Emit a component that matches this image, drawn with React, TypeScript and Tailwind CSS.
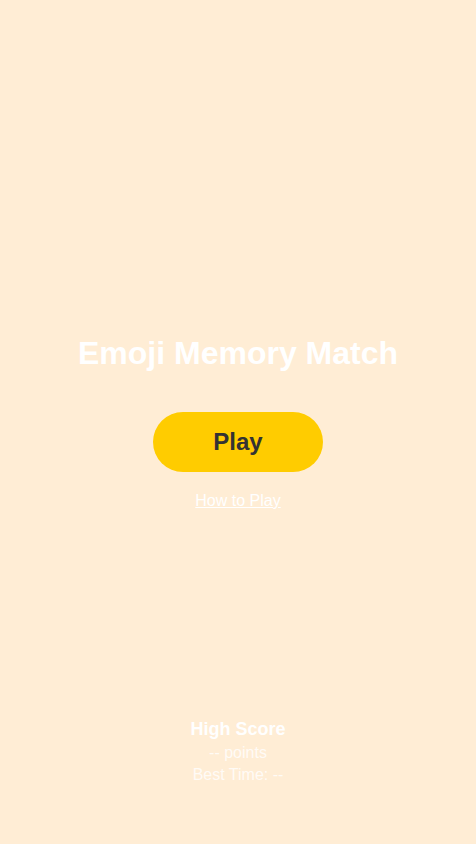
export default function App() {
  return (
    <div
      className="grid h-screen grid-rows-[1fr_auto_1fr] bg-[#ffedd5] text-center text-white"
      style={{ fontFamily: '"Liberation Sans", Arial, sans-serif' }}
    >
      <div />
      <main className="flex flex-col items-center">
        <h1 className="text-[32px] font-bold leading-[38px]">Emoji Memory Match</h1>
        <button className="mt-10 h-[60px] w-[170px] rounded-full bg-[#ffcc00] text-[24px] font-bold text-[#333333]">
          Play
        </button>
        <a href="#" className="mt-5 text-base leading-[18px] underline">
          How to Play
        </a>
      </main>
      <footer className="flex flex-col items-center justify-end pb-[58px]">
        <div className="text-lg font-bold leading-[26px]">High Score</div>
        <div className="text-base leading-[22px] opacity-80">-- points</div>
        <div className="text-base leading-[22px] opacity-80">Best Time: --</div>
      </footer>
    </div>
  );
}
